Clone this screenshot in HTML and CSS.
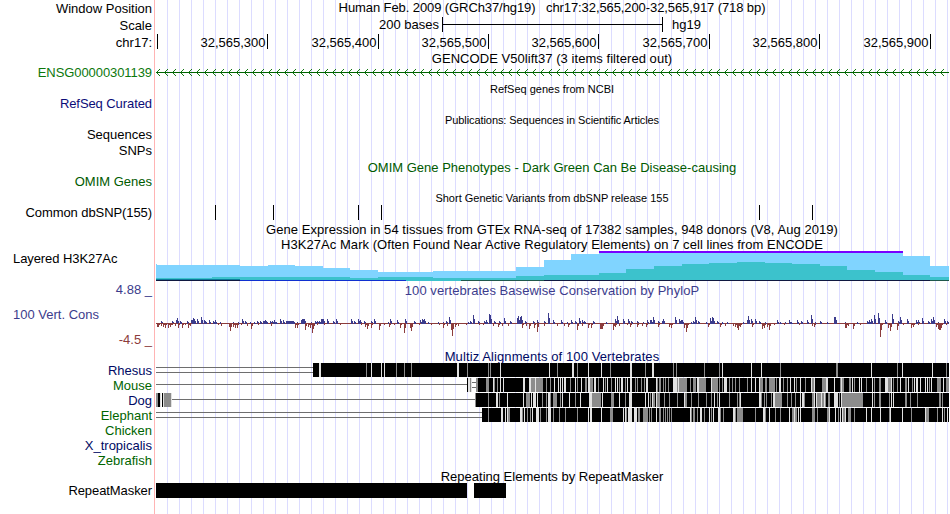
FILE: index.html
```html
<!doctype html>
<html lang="en">
<head>
  <meta charset="UTF-8" />
  <meta name="viewport" content="width=device-width, initial-scale=1.0" />
  <title>Genome Browser chr17:32,565,200-32,565,917</title>
  <link rel="stylesheet" href="styles.css">
</head>
<body>
<div class="browser">
  <div class="row position">
    <div class="label">Window Position</div>
    <div class="title">Human Feb. 2009 (GRCh37/hg19)&nbsp;&nbsp; chr17:32,565,200-32,565,917 (718 bp)</div>
  </div>
  <div class="row scale">
    <div class="label">Scale</div>
    <svg class="track" viewBox="155 0 794 17" width="794" height="17">
      <text x="439" y="12" text-anchor="end" textLength="60">200 bases</text>
      <path d="M442 0h1v7h219v-7h1v15h-1v-7h-219v7h-1z" />
      <text x="672" y="12">hg19</text>
    </svg>
  </div>
  <div class="row ruler">
    <div class="label">chr17:</div>
    <svg class="track" id="ruler" viewBox="155 0 794 16" width="794" height="16"></svg>
  </div>
  <div class="row heading gencode"><div class="title wide">GENCODE V50lift37 (3 items filtered out)</div></div>
  <div class="row r16">
    <div class="label gene tight">ENSG00000301139</div>
    <svg class="track" id="gene" viewBox="155 0 794 16" width="794" height="16"></svg>
  </div>
  <div class="row heading"><div class="title small">RefSeq genes from NCBI</div></div>
  <div class="row r16"><div class="label refseq tight">RefSeq Curated</div></div>
  <div class="row heading"><div class="title small tight">Publications: Sequences in Scientific Articles</div></div>
  <div class="row r16"><div class="label">Sequences</div></div>
  <div class="row r17"><div class="label">SNPs</div></div>
  <div class="row omim-heading"><div class="title omim">OMIM Gene Phenotypes - Dark Green Can Be Disease-causing</div></div>
  <div class="row r16"><div class="label omim">OMIM Genes</div></div>
  <div class="row heading"><div class="title small">Short Genetic Variants from dbSNP release 155</div></div>
  <div class="row r17">
    <div class="label tight">Common dbSNP(155)</div>
    <svg class="track" viewBox="155 0 794 17" width="794" height="17">
      <path d="M215 0h1v15h-1zM273 0h1v15h-1zM358 0h1v15h-1zM381 0h1v15h-1zM759 0h1v15h-1zM812 0h1v15h-1z" />
    </svg>
  </div>
  <div class="row heading"><div class="title wide">Gene Expression in 54 tissues from GTEx RNA-seq of 17382 samples, 948 donors (V8, Aug 2019)</div></div>
  <div class="row h3k-heading"><div class="title wide">H3K27Ac Mark (Often Found Near Active Regulatory Elements) on 7 cell lines from ENCODE</div></div>
  <div class="row h3k">
    <div class="label left tight">Layered H3K27Ac</div>
    <svg class="track" viewBox="155 251 794 32" width="794" height="32">
      <path class="sky" d="M156 280V264h1v1h83v1h28v-1h27v1h28v2h27v2h28v2h55v-1h83v-4h28v-7h27v-6h28v-2h304v4h27v10h19v14z" />
      <path class="teal" d="M156 280v-2h56v-1h138v1h28v-1h55v1h83v-2h28v-1h55v-2h27v-4h28v-3h28v-2h27v-1h28v-1h28v1h27v1h28v2h27v4h28v2h28v3h27v2h19v3z" />
      <path class="purple" d="M599 251h304v2H599z" />
      <path fill="#101840" d="M156 280h793v1H156z" />
      <path fill="#0c7c9c" d="M156 279h84v1h-84z" />
      <path fill="#1030d0" d="M240 280h166v1H240z" />
      <path fill="#3cc2cc" d="M406 280h55v1h-55z" />
      <path fill="#20584c" d="M461 280h83v1h-83zM930 280h19v1h-19z" />
    </svg>
  </div>
  <div class="row heading">
    <div class="label cons max">4.88 _</div>
    <div class="title cons wide">100 vertebrates Basewise Conservation by PhyloP</div>
  </div>
  <div class="row phylop">
    <div class="label-group">
      <div class="label left cons">100 Vert. Cons</div>
      <div class="label neg">-4.5 _</div>
    </div>
    <svg class="track" id="phylop" viewBox="155 298 794 51" width="794" height="51"></svg>
  </div>
  <div class="row multiz-heading"><div class="title navy wider">Multiz Alignments of 100 Vertebrates</div></div>
  <div class="row species">
    <div class="label navy">Rhesus</div>
    <svg class="track" id="rhesus" viewBox="155 0 794 15" width="794" height="15"></svg>
  </div>
  <div class="row species">
    <div class="label green">Mouse</div>
    <svg class="track" id="mouse" viewBox="155 0 794 15" width="794" height="15"></svg>
  </div>
  <div class="row species">
    <div class="label navy">Dog</div>
    <svg class="track" id="dog" viewBox="155 0 794 15" width="794" height="15"></svg>
  </div>
  <div class="row species">
    <div class="label green">Elephant</div>
    <svg class="track" id="elephant" viewBox="155 0 794 15" width="794" height="15"></svg>
  </div>
  <div class="row species"><div class="label green">Chicken</div></div>
  <div class="row species"><div class="label navy">X_tropicalis</div></div>
  <div class="row species"><div class="label green">Zebrafish</div></div>
  <div class="row heading repeat-heading"><div class="title">Repeating Elements by RepeatMasker</div></div>
  <div class="row repeats">
    <div class="label tight">RepeatMasker</div>
    <svg class="track" viewBox="155 0 794 31" width="794" height="31">
      <path d="M156 0h311v15H156zM474 0h32v15h-32z" />
    </svg>
  </div>
</div>
<script src="script.js"></script>
</body>
</html>
```
FILE: styles.css
```css
body {
  margin: 0;
  background-color: white;
  font-family: "Liberation Sans", Arial, sans-serif;
  font-size: 13px;
  line-height: 15px;
  color: black;
}
.browser {
  width: 949px;
  height: 514px;
  overflow: hidden;
  background-image:
    linear-gradient(#ffb4b4, #ffb4b4),
    linear-gradient(white, white),
    linear-gradient(to right, #dcdcff 1px, transparent 1px);
  background-size: 1px 100%, 156px 100%, 12px 100%;
  background-position: 154px 0, 0 0, 155px 0;
  background-repeat: no-repeat, no-repeat, repeat;
}
.row {
  display: grid;
  grid-template-columns: 155px 794px;
  height: 15px;
  white-space: nowrap;
}
.label {
  grid-column: 1;
  padding-right: 3px;
  text-align: right;
}
.label.left {
  padding-left: 13px;
  text-align: left;
}
.title {
  grid-column: 2;
  text-align: center;
}
.title.small {
  padding-top: 1px;
  font-size: 11px;
}
.position .title {
  letter-spacing: -0.09px;
}
.tight {
  letter-spacing: -0.08px;
}
.wide {
  letter-spacing: 0.05px;
}
.wider {
  letter-spacing: 0.1px;
}
.track {
  grid-column: 2;
  display: block;
  shape-rendering: crispEdges;
}

/* row heights */
.position,
.scale,
.r17 {
  height: 17px;
}
.position .label,
.scale .label,
.ruler .label,
.gencode .title,
.repeat-heading .title {
  padding-top: 1px;
}
.ruler,
.r16 {
  height: 16px;
}
.omim-heading,
.h3k-heading,
.multiz-heading {
  height: 14px;
}
.h3k {
  height: 32px;
}
.phylop {
  height: 51px;
}
.repeats {
  height: 31px;
}
.label.max {
  margin-top: -1px;
}
.label-group {
  display: flex;
  flex-direction: column;
  gap: 10px;
  padding-top: 9px;
}

/* colors */
.gene {
  color: #0c780c;
}
.refseq {
  color: #0c0c78;
}
.omim {
  color: #005a00;
}
.cons {
  color: #3c3c8c;
}
.neg {
  color: #8c3c3c;
}
.navy {
  color: #000a64;
}
.green {
  color: #006400;
}
.sky {
  fill: #80d4ff;
}
.teal {
  fill: #3cc2cc;
}
.purple {
  fill: #7800ff;
}
```
FILE: script.js
```js
function addPath(id, d, fill) {
  const path = document.createElementNS('http://www.w3.org/2000/svg', 'path');
  path.setAttribute('d', d);
  path.setAttribute('fill', fill);
  document.getElementById(id).appendChild(path);
}

function rect(x, y, w, h) {
  return `M${x} ${y}h${w}v${h}h${-w}z`;
}

// ruler
[157, 267, 378, 488, 598, 709, 819, 930].forEach((x, i) => {
  addPath('ruler', rect(x, 0, 1, 15), 'black');
  if (i === 0) return;
  const text = document.createElementNS('http://www.w3.org/2000/svg', 'text');
  text.setAttribute('x', x - 1.5);
  text.setAttribute('y', 13);
  text.setAttribute('text-anchor', 'end');
  text.textContent = `32,565,${200 + i * 100}`;
  document.getElementById('ruler').appendChild(text);
});

// gene line with strand arrows
addPath('gene', rect(156, 7, 793, 1), '#006400');
let arrows = '';
for (let x = 157; x < 949; x += 8) {
  [1, 2, 3].forEach((n) => {
    arrows += rect(x + n - 1, 7 - n, 1, 1) + rect(x + n - 1, 7 + n, 1, 1);
  });
}
addPath('gene', arrows, '#147814');

// conservation, x:height
const up = '161:2 172:2 176:3 177:5 180:2 187:2 191:3 192:3 193:5 194:4 197:4 201:6 204:3 205:2 209:3 213:2 215:3 220:1 233:1 238:1 242:4 245:2 250:1 254:1 257:2 260:2 263:2 264:2 265:3 266:2 270:2 272:2 274:3 276:1 280:4 283:3 286:2 287:2 288:2 289:2 290:2 291:2 292:2 293:2 297:1 301:3 302:4 303:4 304:4 311:1 315:2 317:2 319:2 321:4 322:4 323:4 327:4 333:2 336:4 351:4 354:2 358:4 360:3 364:2 371:2 374:4 388:1 390:4 397:3 405:4 414:2 420:3 422:4 423:3 424:4 428:1 438:1 443:1 446:2 449:6 468:1 470:2 473:8 478:2 484:2 486:3 489:9 490:8 494:2 499:2 504:5 510:2 517:5 518:7 520:6 521:7 525:2 533:2 537:3 544:2 548:10 553:3 561:3 567:1 571:3 575:2 579:5 582:3 584:2 593:2 606:1 615:4 617:7 623:4 628:4 631:2 637:2 643:1 647:3 650:3 651:3 653:6 658:2 662:2 663:4 675:6 679:4 681:3 682:3 691:1 693:2 695:6 698:2 706:1 710:5 712:6 713:5 717:2 722:1 727:1 743:1 747:3 748:7 751:4 755:4 759:2 765:1 777:3 780:1 785:1 789:3 791:1 797:3 801:2 807:3 811:8 815:1 820:2 827:1 834:6 835:6 845:1 857:1 867:2 869:3 871:4 874:8 878:10 885:3 892:9 898:2 900:6 907:4 916:3 918:3 922:5 928:2 931:4 933:6 938:1 944:4 947:2';
const down = '157:4 158:4 161:3 163:4 165:5 168:5 170:4 172:2 175:3 178:5 182:5 185:2 188:5 190:3 218:2 221:3 229:4 230:8 233:4 235:5 237:5 241:2 247:3 251:6 258:2 271:3 295:5 297:5 305:7 308:4 310:5 312:10 313:6 317:2 324:2 340:2 361:2 365:4 367:6 371:5 379:7 384:2 389:4 394:2 400:5 404:10 410:5 411:8 419:2 431:2 439:2 443:5 447:3 451:7 452:13 455:4 458:3 466:2 479:2 483:2 493:3 498:4 502:3 508:3 522:5 526:3 529:6 534:5 537:9 544:3 557:3 564:3 568:4 577:7 582:3 588:5 591:5 600:6 601:6 602:6 613:7 615:4 619:3 627:2 630:4 637:4 642:3 646:4 658:4 669:4 671:5 684:5 686:9 687:5 708:4 720:4 725:3 733:3 735:4 737:5 738:7 740:4 752:4 762:6 764:5 767:4 769:7 774:2 784:2 799:2 812:3 814:4 845:5 846:5 848:3 853:6 860:2 880:14 881:5 888:5 890:8 897:7 903:2 911:5 913:4 918:2 936:4 938:6 939:7 940:7 941:5 946:2';
function bars(list, draw) {
  return list.split(' ').map((item) => {
    const [x, h] = item.split(':').map(Number);
    // bars fall off on the next base
    return draw(x, h) + draw(x + 1, Math.floor(h / 2));
  }).join('');
}
addPath('phylop', rect(156, 323, 793, 1), '#8c3c3c');
addPath('phylop', bars(up, (x, h) => rect(x, 323 - h, 1, h + 1)), '#3c3c8c');
addPath('phylop', bars(down, (x, h) => (h ? rect(x, 323, 1, h) : '')), '#8c3c3c');

// alignments: x, optional :width, g = gray, l = light, k = black
const shades = { g: '#8c8c8c', l: '#e1e1e1', k: 'black' };
const gapLine = '#6e6e6e';

function alignment(id, start, marks) {
  addPath(id, rect(start, 0, 949 - start, 14), 'black');
  marks.split(' ').forEach((mark) => {
    const [x, w] = mark.slice(0, -1).split(':').map(Number);
    addPath(id, rect(x, 0, w || 1, 14), shades[mark.slice(-1)]);
  });
}

addPath('rhesus', rect(156, 4, 157, 1) + rect(156, 9, 157, 1), gapLine);
alignment('rhesus', 313, '319:2l 366g 371l 381l 384l 396g 404g 411g 457:2l 467g 488g 490g 500l 549l 557g 572:2l 577g 588l 601l 610g 630:2l 645g 652:2l 673g 676g 704g 719g 722l 751l 761l 780g 836:2g 871l 897g 902l 932l 946g');

addPath('mouse', rect(156, 6, 311, 1) + rect(472, 4, 4, 1) + rect(472, 9, 4, 1), gapLine);
alignment('mouse', 478, '467k 468:2l 470g 471l 476:2g 486:3g 493l 494g 497g 500l 503l 523:2l 529:2l 531:12g 535l 546g 550g 554l 558l 560l 562l 564:2l 570g 575l 577g 581l 585:2g 588:2l 590:3g 594:2l 598g 603l 605g 607l 611g 615l 617l 619g 621:2l 625g 627l 630:2l 635g 637g 641g 644g 646:2l 656l 657g 659:2g 663g 665g 668g 673:4l 677g 678l 679:8g 690g 693:3g 697:2l 699:7g 711l 712:6g 719g 722g 724:3l 729g 732g 735g 739g 747g 751l 755l 759l 760:3g 765:2g 769:6g 776g 779:2l 783g 787g 790l 794l 796g 800l 805g 811l 812:2g 814l 822:4g 826:2l 834l 840g 841l 842:2g 849:2g 852l 854g 859l 861l 866g 872l 874g 879:2g 885:3l 888:3g 891l 893g 897g 900l 905:2g 908l 912g 914l 916:2l 920l 925l 927l 929g 931l 937:4g 943l 946:3g');

addPath('dog', rect(172, 6, 303, 1), gapLine);
alignment('dog', 475, '156:2g 158:2k 160l 162k 163l 164:7g 171l 475g 488g 496:2l 499g 507l 523l 526g 527:3g 531l 533:2l 535l 537l 542g 546g 548:2l 550g 553g 554:3g 560g 562l 569l 575g 580l 589:2l 591l 592:9g 602l 611:3g 619l 625g 629:3l 645l 648l 650g 652l 653:2g 656l 657:3g 664g 669g 677g 684l 685:2g 691g 698g 706g 711g 714l 717g 719l 729g 737g 739g 740l 759:2l 761g 764g 766g 771g 773:2l 775:7g 787g 791g 795g 800l 802:2l 804g 812:2g 814l 816l 817:4g 821l 822:2g 824l 825g 828g 829g 834:4l 839g 841l 842:21g 872l 874g 879:2g 889g 891l 893l 905:2g 910g 917g 939:2g 942g');

addPath('elephant', rect(156, 4, 326, 1) + rect(156, 9, 326, 1), gapLine);
alignment('elephant', 482, '488g 501:2l 505l 507l 508:2g 520:2l 522g 524l 527g 530g 532l 536:3l 540g 546g 548:3l 553g 559g 565g 577g 588l 590:2l 601l 610:3g 623l 625l 626g 628:4l 634:3l 638:2g 643:5g 649g 651g 656l 659:2g 663g 665g 667g 669g 671g 690l 691g 693:2g 697g 700:2l 704g 709l 711g 713l 718:2l 720g 723g 733:2l 735g 737:6g 755g 763:2l 765g 769l 775g 780g 789l 792:2g 794l 795:2g 798l 800l 812:3g 817g 827:2g 829l 835l 838g 840l 842l 843:2g 845l 848:3g 854g 866l 871l 880l 889g 890l 902l 911g 925l 926:3g 937g 942l 944g 947l');
```
